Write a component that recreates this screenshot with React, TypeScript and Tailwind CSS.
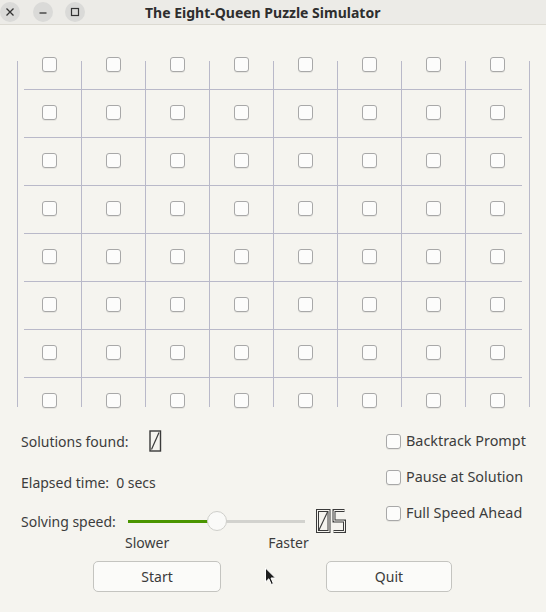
import React from "react";

const font = { fontFamily: '"Noto Sans", "Open Sans", sans-serif' };

function Box({ className = "" }: { className?: string }) {
  return (
    <div
      className={
        "w-[15px] h-[15px] rounded-[3px] border border-[#a8a8a8] bg-[#fcfcfb] shadow-[0_1px_0_rgba(0,0,0,0.06)] " +
        className
      }
    />
  );
}

function BoardLines() {
  const v = Array.from({ length: 9 }, (_, i) => 17 + 64 * i);
  const h = Array.from({ length: 7 }, (_, j) => 49 + 48 * j);
  return (
    <svg
      className="absolute left-0 top-0"
      width={546}
      height={384}
      viewBox="0 0 546 384"
    >
      {v.map((x) => (
        <line key={"v" + x} x1={x + 0.5} y1={21} x2={x + 0.5} y2={367} stroke="#b9b9c9" strokeWidth={1} />
      ))}
      {h.map((y) => (
        <line key={"h" + y} x1={24} y1={y + 0.5} x2={522} y2={y + 0.5} stroke="#b9b9c9" strokeWidth={1} />
      ))}
    </svg>
  );
}

function Cursor() {
  return (
    <svg className="absolute left-[264px] top-[567px]" width={14} height={20} viewBox="0 0 14 20">
      <path d="M1.5 1 L1.5 15 L4.8 11.8 L7.3 17.5 L9.4 16.6 L7 11 L11.5 11 Z" fill="#1e1e1e" stroke="#ffffff" strokeWidth={1} strokeLinejoin="round" />
    </svg>
  );
}

export default function App() {
  return (
    <div className="relative w-[546px] h-[612px] bg-[#f5f4ef] text-[#3c3c3c] overflow-hidden" style={font}>
      {/* Title bar */}
      <div className="flex items-center h-[25px] bg-[#ecebe7] border-b border-[#dcdad2]">
        <div className="w-[20px] h-[20px] rounded-full bg-[#dadad8] flex items-center justify-center">
          <svg width="10" height="10" viewBox="0 0 10 10">
            <path d="M1.5 1.5 L8.5 8.5 M8.5 1.5 L1.5 8.5" stroke="#333" strokeWidth="1.3" />
          </svg>
        </div>
        <div className="ml-[13px] w-[20px] h-[20px] rounded-full bg-[#dadad8] flex items-center justify-center">
          <svg width="10" height="10" viewBox="0 0 10 10">
            <path d="M1.5 6 L8.5 6" stroke="#333" strokeWidth="1.3" />
          </svg>
        </div>
        <div className="ml-[12px] w-[20px] h-[20px] rounded-full bg-[#dadad8] flex items-center justify-center">
          <svg width="10" height="10" viewBox="0 0 10 10">
            <rect x="1.5" y="1.5" width="7" height="7" fill="none" stroke="#333" strokeWidth="1.2" />
          </svg>
        </div>
        <div className="ml-[60px] text-[14px] font-bold text-[#2e2e2e] leading-[25px]">
          The Eight-Queen Puzzle Simulator
        </div>
      </div>

      {/* Board */}
      <div className="relative mt-[15px] w-[546px] h-[384px]">
        <BoardLines />
        <div className="relative ml-[17px] grid grid-cols-[repeat(8,64px)] grid-rows-[repeat(8,48px)]">
          {Array.from({ length: 64 }, (_, k) => (
            <div key={k} className="flex items-center justify-center">
              <Box />
            </div>
          ))}
        </div>
      </div>

      {/* Controls */}
      <div className="flex text-[14px]">
        <div className="w-[386px] pl-[21px] flex flex-col">
          <div className="h-[34px] flex items-center">
            <span className="w-[128px]">Solutions found:</span>
            <svg width="13" height="24" viewBox="0 0 13 24">
              <rect x="1" y="2" width="10.5" height="20" fill="none" stroke="#3a3a3a" strokeWidth="1.4" />
              <path d="M2.5 20.5 L10 3.5" stroke="#3a3a3a" strokeWidth="1.2" />
            </svg>
          </div>
          <div className="h-[48px] flex items-center">
            <span>Elapsed time:</span>
            <span className="ml-[7px]">0 secs</span>
          </div>
          <div className="h-[30px] flex items-center">
            <span className="w-[107px]">Solving speed:</span>
            <div className="relative w-[177px] h-[20px] flex items-center">
              <div className="w-[80px] h-[3px] bg-[#4a9500]" />
              <div className="flex-1 h-[3px] bg-[#d2d2ce]" />
              <div className="absolute left-[79px] top-0 w-[20px] h-[20px] rounded-full bg-[#fafaf8] border border-[#cfcfcb]" />
            </div>
            <svg className="ml-[11px]" width="31" height="25" viewBox="0 0 31 25">
              <rect x="1.5" y="1.5" width="11.5" height="21" fill="none" stroke="#3a3a3a" strokeWidth="3" />
              <rect x="1.5" y="1.5" width="11.5" height="21" fill="none" stroke="#f5f4ef" strokeWidth="1" />
              <path d="M3 21 L11.5 3" stroke="#3a3a3a" strokeWidth="1.1" />
              <path d="M28.5 1.5 H18 V12 H28.5 V22.5 H17.5" fill="none" stroke="#3a3a3a" strokeWidth="3" />
              <path d="M28.5 1.5 H18 V12 H28.5 V22.5 H17.5" fill="none" stroke="#f5f4ef" strokeWidth="1" />
            </svg>
          </div>
          <div className="h-[14px] flex items-center leading-[14px]">
            <span className="ml-[104px]">Slower</span>
            <span className="ml-[99px]">Faster</span>
          </div>
        </div>
        <div className="flex flex-col gap-[2px] text-[14.4px]">
          {["Backtrack Prompt", "Pause at Solution", "Full Speed Ahead"].map((t) => (
            <div key={t} className="h-[34px] flex items-center">
              <Box />
              <span className="ml-[5px]">{t}</span>
            </div>
          ))}
        </div>
      </div>

      {/* Buttons */}
      <div className="flex mt-[11px] pl-[93px] text-[14px]">
        <button className="w-[128px] h-[31px] rounded-[5px] border border-[#c4c4c0] bg-[#fbfbf9] text-[#3a3a3a]">
          Start
        </button>
        <button className="ml-[105px] w-[126px] h-[31px] rounded-[5px] border border-[#c4c4c0] bg-[#fbfbf9] text-[#3a3a3a]">
          Quit
        </button>
      </div>

      <Cursor />
    </div>
  );
}
